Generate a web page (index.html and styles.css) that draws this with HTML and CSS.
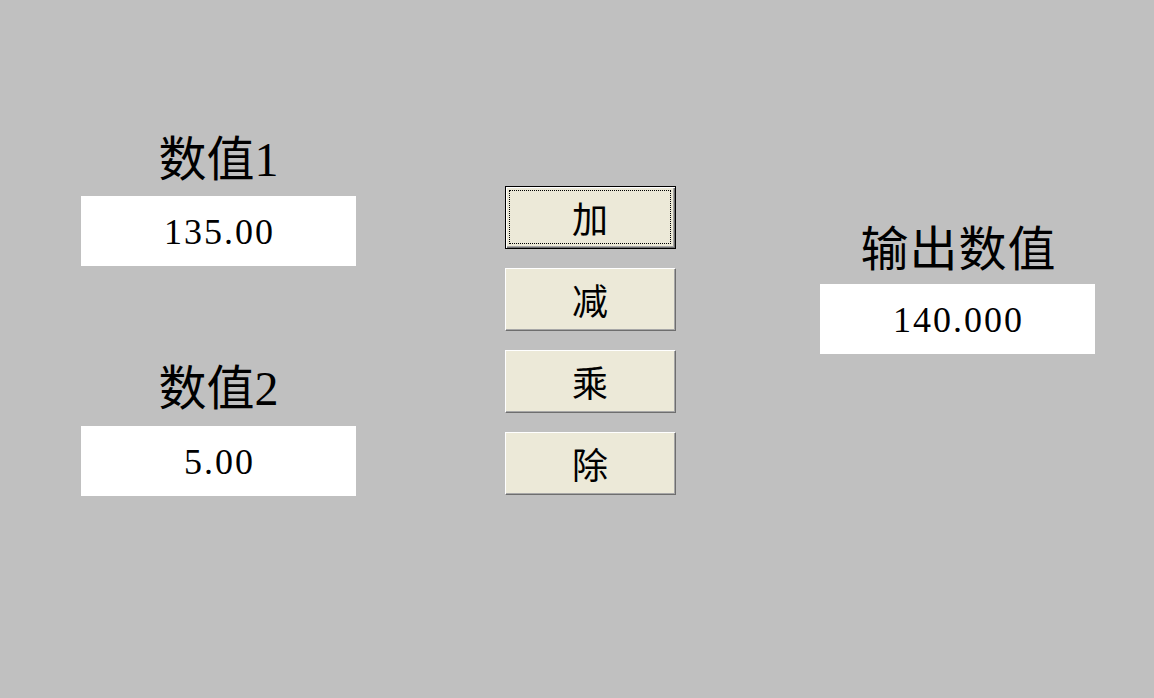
FILE: index.html
```html
<!DOCTYPE html>
<html lang="zh-CN">
<head>
<meta charset="utf-8">
<title>计算器</title>
<link rel="stylesheet" href="styles.css">
</head>
<body>
<main class="panel">
  <section class="col col-inputs">
    <div class="label label-first">数值1</div>
    <div class="field">135.00</div>
    <div class="label label-second">数值2</div>
    <div class="field">5.00</div>
  </section>
  <section class="col col-ops">
    <button class="btn btn-focus"><span class="focus-ring">加</span></button>
    <button class="btn"><span class="focus-ring none">减</span></button>
    <button class="btn"><span class="focus-ring none">乘</span></button>
    <button class="btn"><span class="focus-ring none">除</span></button>
  </section>
  <section class="col col-output">
    <div class="label label-out">输出数值</div>
    <div class="field">140.000</div>
  </section>
</main>
</body>
</html>
```
FILE: styles.css
```css
html, body {
  margin: 0;
  padding: 0;
}
body {
  width: 1154px;
  height: 698px;
  background: #c0c0c0;
  overflow: hidden;
  font-family: "Liberation Serif", "Noto Sans CJK SC", serif;
  color: #000;
}
.panel {
  display: flex;
  align-items: flex-start;
  padding-left: 81px;
}
.col {
  display: flex;
  flex-direction: column;
}
.col-inputs {
  width: 275px;
  padding-top: 136px;
}
.col-ops {
  width: 171px;
  margin-left: 149px;
  padding-top: 186px;
  gap: 19px;
}
.col-output {
  width: 275px;
  margin-left: 144px;
  padding-top: 226px;
}
.label {
  height: 48px;
  line-height: 48px;
  font-size: 48px;
  text-align: center;
  white-space: nowrap;
}
.label-first {
  margin-bottom: 12px;
}
.label-second {
  margin-top: 99px;
  margin-bottom: 13px;
}
.label-out {
  margin-bottom: 10px;
  letter-spacing: 1px;
  margin-left: 2px;
}
.field {
  height: 70px;
  background: #fff;
  display: flex;
  align-items: center;
  justify-content: center;
  font-family: "Liberation Serif", "Noto Sans CJK SC", serif;
  font-size: 36px;
  letter-spacing: 2px;
  padding-top: 2px;
  padding-left: 2px;
  box-sizing: border-box;
}
.btn {
  width: 171px;
  height: 63px;
  box-sizing: border-box;
  margin: 0;
  padding: 0;
  background: #ece9d8;
  border: 1px solid;
  border-color: #ffffff #6e6e6e #6e6e6e #ffffff;
  box-shadow: inset -1px -1px 0 #a7a7a7;
  font-family: "Noto Sans CJK SC", sans-serif;
  font-size: 36px;
  color: #000;
  display: flex;
  align-items: stretch;
  justify-content: stretch;
}
.btn-focus {
  border: 1px solid #000;
  box-shadow: inset 1px 1px 0 #ffffff, inset -1px -1px 0 #6e6e6e, inset -2px -2px 0 #a7a7a7;
}
.focus-ring {
  flex: 1;
  display: flex;
  align-items: center;
  justify-content: center;
  margin: 3px 4px 4px 3px;
  border: 1px dotted #000;
  line-height: 1;
}
.focus-ring.none {
  border-color: transparent;
}
```
